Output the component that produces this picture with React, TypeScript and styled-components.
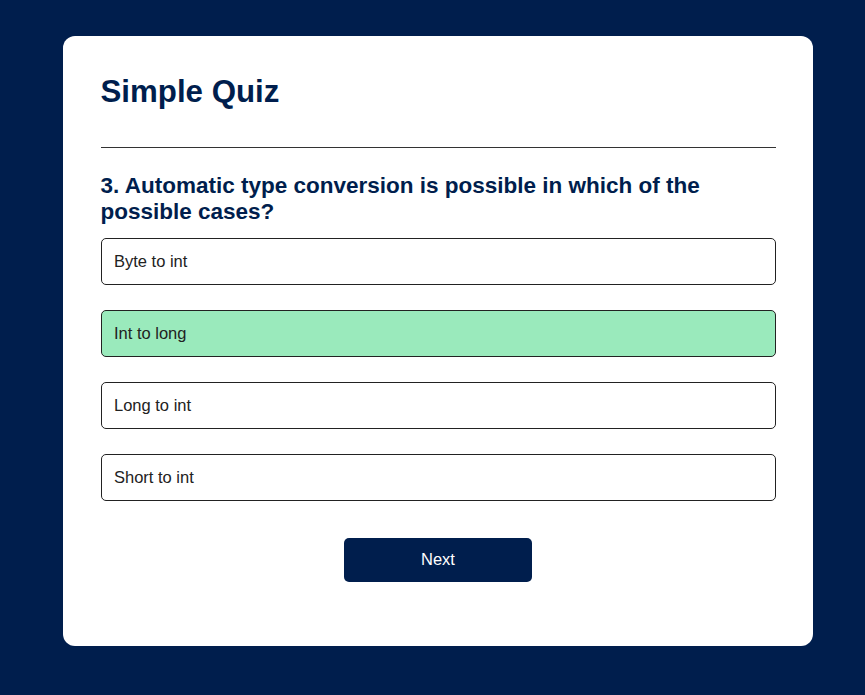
import styled, { createGlobalStyle } from "styled-components";

const GlobalStyle = createGlobalStyle`
	* {
		margin: 0;
		padding: 0;
		box-sizing: border-box;
	}

	body {
		background: #001e4d;
		font-family: "Liberation Sans", Arial, sans-serif;
	}
`;

type Answer = {
	text: string;
	correct?: boolean;
};

const answers: Answer[] = [
	{ text: "Byte to int" },
	{ text: "Int to long", correct: true },
	{ text: "Long to int" },
	{ text: "Short to int" },
];

const App = () => {
	return (
		<>
			<GlobalStyle />
			<Page>
				<Card>
					<Title>Simple Quiz</Title>
					<Quiz>
						<Question>
							3. Automatic type conversion is possible in which of the possible
							cases?
						</Question>
						<AnswerList>
							{answers.map((answer) => (
								<AnswerButton key={answer.text} $correct={answer.correct}>
									{answer.text}
								</AnswerButton>
							))}
						</AnswerList>
						<NextButton>Next</NextButton>
					</Quiz>
				</Card>
			</Page>
		</>
	);
};

export default App;

const Page = styled.div`
	min-height: 100vh;
	padding: 36px 0 49px 63px;
	background: #001e4d;
`;

const Card = styled.div`
	width: 750px;
	background: #fff;
	border-radius: 12px;
	padding: 37.5px 37.5px 39px;
`;

const Title = styled.h1`
	font-size: 31.25px;
	font-weight: 700;
	line-height: 36px;
	color: #001e4d;
	border-bottom: 1px solid #333;
	padding-bottom: 37.5px;
`;

const Quiz = styled.div`
	padding: 25px 0;
`;

const Question = styled.h2`
	font-size: 22.5px;
	font-weight: 700;
	line-height: 26px;
	color: #001e4d;
`;

const AnswerList = styled.div`
	display: flex;
	flex-direction: column;
	gap: 25px;
	margin-top: 12.5px;
`;

const AnswerButton = styled.button<{ $correct?: boolean }>`
	width: 100%;
	height: 47px;
	padding: 0 12.5px;
	text-align: left;
	font-family: "Liberation Sans", Arial, sans-serif;
	font-size: 16.5px;
	color: #222;
	background: ${({ $correct }) => ($correct ? "#9aeabc" : "#fff")};
	border: 1px solid #222;
	border-radius: 5px;
	cursor: pointer;
`;

const NextButton = styled.button`
	display: block;
	width: 188px;
	height: 44.5px;
	margin: 37px auto 0;
	font-family: "Liberation Sans", Arial, sans-serif;
	font-size: 16.5px;
	color: #fff;
	background: #001e4d;
	border: 0;
	border-radius: 5px;
	cursor: pointer;
`;
